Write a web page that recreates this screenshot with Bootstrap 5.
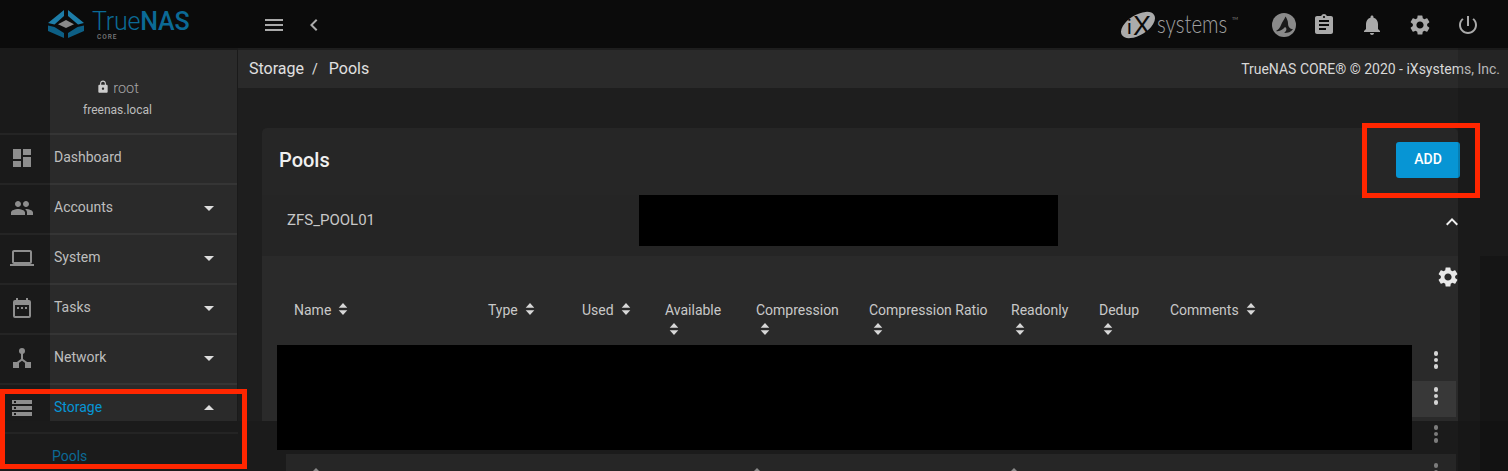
<!DOCTYPE html>
<html lang="en">
<head>
<meta charset="utf-8">
<title>TrueNAS Pools</title>
<link rel="stylesheet" href="https://cdn.jsdelivr.net/npm/bootstrap@5.3.0/dist/css/bootstrap.min.css">
<style>
html,body{height:471px;overflow:hidden;background:#1c1c1c}
body{font-family:Roboto,"Liberation Sans",sans-serif;font-size:14px;color:#c4c4c4}
.shell{width:1508px;height:471px;overflow:hidden}
.upper{height:421px;overflow:hidden}
.lower{height:50px;overflow:hidden;background:#1b1b1b}
.topbar{height:48px;background:#0b0b0b}
.brand{width:262px;padding-left:48px}
.brand-name{font-size:25px;line-height:25px;color:#0b6a96;font-weight:300;letter-spacing:-.2px}
.brand-name b{font-weight:500;letter-spacing:-.2px}
.brand-sub{font-size:6.5px;line-height:7px;letter-spacing:1px;color:#7c7c7c;padding-left:5px;font-weight:500}
.brand-words{margin-left:8px;margin-top:2px}
.ico{fill:#aaa;display:block}
.ctl{width:24px;height:24px;margin-top:2px}
.ctl-back{margin-left:16px}
.tool{width:48px;height:48px}
.tool-sm{width:32px}
.tools{padding-right:16px}
.vendor{margin-right:29px;margin-top:2px}
.body-row{height:373px}
.side{width:238px;background:#1a1a1a;padding-top:2px;flex:none}
.who-wrap{height:83px;position:relative}
.who-panel{height:83px;margin-left:50px;margin-right:1px;background:#2a2a2a}
.who{position:absolute;left:0;top:0;width:235px;padding-top:29px;text-align:center;line-height:20px}
.who-name{color:#a6a6a6;font-weight:300;font-size:14.5px}
.who-host{font-size:12px;color:#bdbdbd;margin-top:1px}
.who .ico{display:inline-block;vertical-align:-1px;margin-right:3px;fill:#ccc}
.rail-row{height:50px;margin-right:1px;flex:none}
.rail-cell{width:50px;flex:none;border-top:2px solid #242424}
.rail-cell .ico{fill:#8e8e8e;margin-top:-3px;margin-left:-6px}
.rail-label{background:#2a2a2a;border-top:2px solid #353535;padding:0 16px 3px 4px;color:#bebebe;flex:1 1 auto}
.rail-label .ico{fill:#ddd}
.is-on{color:#0795d4}
.main{flex:1 1 auto;padding-top:2px;background:#1e1e1e;min-width:0}
.crumbs{height:38px;background:#2a2a2a;padding:0 8px 0 11px;color:#e0e0e0;font-size:16px}
.crumbs-sep{margin:0 11px 0 8px;font-size:14px}
.legal{font-size:14px;color:#d8d8d8}
.pool-card{margin:40px 50px 0 24px;background:#262626;border:0;border-radius:5px 5px 0 0;--bs-card-bg:#262626}
.pool-head{height:67px;padding:0 0 4px 17px}
.pool-title{font-size:20px;font-weight:500;color:#f0f0f0}
.btn-add{width:64px;height:36px;padding:0;margin-right:-2px;background:#0795d4;border:0;border-radius:3px;color:#fff;font-size:14px;font-weight:500}
.pool-row{height:61px;padding:0 0 10px 25px;background:#252525;font-size:15px;color:#c8c8c8}
.pool-row .ico{fill:#f0f0f0;margin-right:-6px;margin-top:2px}
.pool-body{background:#2a2a2a;padding-left:15px;padding-right:2px;height:200px}
.gear-row{height:42px}
.gear-row .ico{fill:#e8e8e8;margin-right:-4px;margin-top:9px}
.tbl{--bs-table-bg:transparent;--bs-table-color:#c8c8c8;table-layout:fixed;width:1179px;margin:0}
.tbl th{font-weight:400;padding:2px 0 0 17px;height:47px;vertical-align:top;line-height:20px;white-space:nowrap}
.tbl td{height:36px;padding:0}
.tbl td.act{padding:0 0 0 4px;text-align:center;vertical-align:top}
.tbl tr.is-hover td{background:#383838}
.sorter{display:inline-block;width:10px;height:12px;margin-left:7px;vertical-align:0;fill:#d8d8d8}
.sorter.under{display:block;margin:3px 0 0 4px}
.dots{display:flex;flex-direction:column;align-items:center;gap:2px;padding-top:6px}
.dots i{display:block;width:4.5px;height:4.5px;border-radius:50%;background:#d4d4d4}
.dots.dim i{background:#7c7c7c}
.low-side{width:238px;flex:none;padding-top:11px;padding-left:5px}
.low-line{border-top:2px solid #242424;padding:12px 0 0 47px;color:#0b6a96;line-height:20px}
.low-main{flex:1 1 auto}
.low-kebabs{height:33px;width:1221px}
.low-kebabs .dots{width:44px;margin-left:1176px;padding-top:4px}
.low-card{height:17px;margin:0 52px 0 48px;background:#262626;position:relative}
.low-dots{position:absolute;left:1128px;top:0;width:44px;padding-top:9px}
.tip{width:0;height:0;border:3px solid transparent;border-top:0;border-bottom:3px solid #8a8a8a;position:absolute;top:14px}
.tip-a{left:27px}.tip-b{left:468px}.tip-c{left:725px}
.cover{position:absolute;background:#000;z-index:3}
.cover-a{left:639px;top:195px;width:419px;height:51px}
.cover-b{left:277px;top:345px;width:1135px;height:105px}
.frame{position:absolute;border:5px solid #ff2600;z-index:4}
.frame-a{left:1362px;top:123px;width:118px;height:75px}
.frame-b{left:0;top:389px;width:247px;height:80px}
.dimmer{position:absolute;left:1458px;top:48px;width:50px;height:423px;background:rgba(8,8,8,.16);z-index:2}
.dimmer-far{position:absolute;left:1480px;top:256px;width:28px;height:215px;background:rgba(0,0,0,.18);z-index:2}
.wrap-rel{position:relative}
</style>
</head>
<body>
<svg width="0" height="0" class="d-none">
<symbol id="i-dash" viewBox="0 0 24 24"><path d="M3 13h8V3H3v10zm0 8h8v-6H3v6zm10 0h8V11h-8v10zm0-18v6h8V3h-8z"/></symbol>
<symbol id="i-group" viewBox="0 0 24 24"><path d="M16 11c1.66 0 2.99-1.34 2.99-3S17.66 5 16 5c-1.66 0-3 1.34-3 3s1.34 3 3 3zm-8 0c1.66 0 2.99-1.34 2.99-3S9.66 5 8 5C6.34 5 5 6.34 5 8s1.34 3 3 3zm0 2c-2.33 0-7 1.17-7 3.5V19h14v-2.5c0-2.33-4.67-3.5-7-3.5zm8 0c-.29 0-.62.02-.97.05 1.16.84 1.97 1.97 1.97 3.45V19h6v-2.5c0-2.33-4.67-3.5-7-3.5z"/></symbol>
<symbol id="i-laptop" viewBox="0 0 24 24"><path d="M20 18c1.1 0 1.99-.9 1.99-2L22 6c0-1.1-.9-2-2-2H4c-1.1 0-2 .9-2 2v10c0 1.1.9 2 2 2H0v2h24v-2h-4zM4 6h16v10H4V6z"/></symbol>
<symbol id="i-cal" viewBox="0 0 24 24"><path fill-rule="evenodd" d="M19 4h-1V2h-2v2H8V2H6v2H5a2 2 0 0 0-2 2v14a2 2 0 0 0 2 2h14a2 2 0 0 0 2-2V6a2 2 0 0 0-2-2zm0 16H5V9h14v11z"/><path d="M7 11h2v2H7zM11 11h2v2h-2zM15 11h2v2h-2z"/></symbol>
<symbol id="i-net" viewBox="0 0 24 24"><circle cx="12" cy="5" r="3"/><path d="M11 7h2v6l5.500 4-1.200 1.600L12 14.800 6.700 18.600 5.500 17l5.500-4z"/><path d="M3 16h6v6H3zM15 16h6v6h-6z"/></symbol>
<symbol id="i-store" viewBox="0 0 24 24"><path d="M2 20h20v-4H2v4zm2-3h2v2H4v-2zM2 4v4h20V4H2zm4 3H4V5h2v2zm-4 7h20v-4H2v4zm2-3h2v2H4v-2z"/></symbol>
<symbol id="i-menu" viewBox="0 0 24 24"><path d="M3 18h18v-2H3v2zm0-5h18v-2H3v2zm0-7v2h18V6H3z"/></symbol>
<symbol id="i-back" viewBox="0 0 24 24"><path d="M15.410 7.410L14 6l-6 6 6 6 1.410-1.410L10.830 12z"/></symbol>
<symbol id="i-clip" viewBox="0 0 24 24"><path d="M19 3h-4.180C14.400 1.840 13.300 1 12 1c-1.300 0-2.400.84-2.820 2H5c-1.100 0-2 .9-2 2v14c0 1.100.9 2 2 2h14c1.100 0 2-.9 2-2V5c0-1.100-.9-2-2-2zm-7 0c.55 0 1 .45 1 1s-.45 1-1 1-1-.45-1-1 .45-1 1-1zm2 14H7v-2h7v2zm3-4H7v-2h10v2zm0-4H7V7h10v2z"/></symbol>
<symbol id="i-bell" viewBox="0 0 24 24"><path d="M12 22c1.100 0 2-.9 2-2h-4c0 1.100.89 2 2 2zm6-6v-5c0-3.070-1.640-5.640-4.500-6.320V4c0-.83-.67-1.500-1.500-1.500s-1.500.67-1.500 1.500v.68C7.630 5.360 6 7.920 6 11v5l-2 2v1h16v-1l-2-2z"/></symbol>
<symbol id="i-gear" viewBox="0 0 24 24"><path d="M19.140 12.940c.04-.3.06-.61.06-.94 0-.32-.02-.64-.07-.94l2.030-1.580a.49.49 0 0 0 .12-.61l-1.920-3.320a.488.488 0 0 0-.59-.22l-2.390.96c-.5-.38-1.030-.7-1.620-.94l-.36-2.540a.484.484 0 0 0-.48-.41h-3.840c-.24 0-.43.17-.47.41l-.36 2.540c-.59.24-1.130.57-1.620.94l-2.390-.96c-.22-.08-.47 0-.59.22L2.740 8.870c-.12.21-.08.47.12.61l2.030 1.580c-.05.3-.09.63-.09.94s.02.64.07.94l-2.030 1.580a.49.49 0 0 0-.12.61l1.920 3.320c.12.22.37.29.59.22l2.390-.96c.5.38 1.030.7 1.620.94l.36 2.540c.05.24.24.41.48.41h3.840c.24 0 .44-.17.47-.41l.36-2.540c.59-.24 1.130-.56 1.620-.94l2.390.96c.22.08.47 0 .59-.22l1.920-3.320c.12-.22.07-.47-.12-.61l-2.010-1.580zM12 15.600c-1.980 0-3.600-1.620-3.600-3.600s1.620-3.600 3.600-3.600 3.600 1.620 3.600 3.600-1.620 3.600-3.600 3.600z"/></symbol>
<symbol id="i-power" viewBox="0 0 24 24"><path d="M13 3h-2v10h2V3zm4.830 2.170l-1.420 1.420C17.990 7.860 19 9.810 19 12c0 3.870-3.130 7-7 7s-7-3.130-7-7c0-2.190 1.010-4.140 2.580-5.420L6.170 5.170C4.230 6.820 3 9.260 3 12c0 4.970 4.030 9 9 9s9-4.030 9-9c0-2.740-1.230-5.180-3.170-6.830z"/></symbol>
<symbol id="i-lock" viewBox="0 0 24 24"><path d="M18 8h-1V6c0-2.760-2.240-5-5-5S7 3.240 7 6v2H6c-1.100 0-2 .9-2 2v10c0 1.100.9 2 2 2h12c1.100 0 2-.9 2-2V10c0-1.100-.9-2-2-2zm-6 9c-1.100 0-2-.9-2-2s.9-2 2-2 2 .9 2 2-.9 2-2 2zm3.100-9H8.900V6c0-1.710 1.390-3.100 3.100-3.100 1.710 0 3.100 1.390 3.100 3.100v2z"/></symbol>
<symbol id="i-down" viewBox="0 0 24 24"><path d="M7 10l5 5 5-5z"/></symbol>
<symbol id="i-up" viewBox="0 0 24 24"><path d="M7 14l5-5 5 5z"/></symbol>
<symbol id="i-chev" viewBox="0 0 24 24"><path d="M12 8l-6 6 1.410 1.410L12 10.830l4.590 4.580L18 14z"/></symbol>
<symbol id="i-sort" viewBox="0 0 10 14"><path d="M5 0l5 5.500H0zM5 14L0 8.500h10z"/></symbol>
</svg>

<div class="shell wrap-rel">
  <div class="upper">
    <header class="topbar d-flex align-items-center">
      <div class="brand d-flex align-items-center">
        <svg width="36" height="30" viewBox="48 9 36 30" aria-label="TrueNAS logo">
          <path fill="#1d7da8" d="M48 23l16-13v6l-9.500 8.500zM68 10l16 13-6 1.500L68 16z"/>
          <path fill="#0d5f85" d="M48 25.500l6.500 1.500L64 33v5l-16-7zM84 25.500L77.500 27 68 33v5l16-7z"/>
          <path fill="#8a8a8a" d="M66 20l8 4.200L66 28l-8-3.800z"/>
        </svg>
        <div class="brand-words">
          <div class="brand-name">True<b>NAS</b></div>
          <div class="brand-sub">CORE</div>
        </div>
      </div>
      <svg class="ico ctl"><use href="#i-menu"/></svg>
      <svg class="ico ctl ctl-back"><use href="#i-back"/></svg>
      <div class="ms-auto d-flex align-items-center tools">
        <svg class="vendor" width="120" height="36" viewBox="0 0 120 36" aria-label="iXsystems">
          <ellipse cx="19" cy="18" rx="19" ry="10" fill="#ababab" transform="rotate(-32 19 18)"/>
          <text x="8" y="27" font-family="Liberation Sans, sans-serif" font-size="21" fill="#0b0b0b">i</text>
          <text x="14" y="28" font-family="Liberation Sans, sans-serif" font-size="27" fill="#0b0b0b">X</text>
          <text transform="translate(38 26) scale(.82 1)" font-family="Lato, sans-serif" font-size="25" font-weight="300" fill="#a0a0a0">systems</text>
          <text x="113" y="13" font-family="Lato, sans-serif" font-size="4" fill="#888">TM</text>
        </svg>
        <div class="tool tool-sm d-flex align-items-center justify-content-center">
          <svg class="ctl" viewBox="0 0 24 24"><circle cx="12" cy="12" r="12" fill="#8a8a8a"/><path fill="#1a1a1a" d="M13.500 3.500C12 7 10 9 9 12c-1 3-3 5-5 6 4 1 7-2 9-4 2 1 2 4-1 6 4 0 7-1 9-4-3 0-5-2-5-6 0-2-1.500-5-2.500-6.500z"/></svg>
        </div>
        <div class="tool d-flex align-items-center justify-content-center"><svg class="ico ctl"><use href="#i-clip"/></svg></div>
        <div class="tool d-flex align-items-center justify-content-center"><svg class="ico ctl"><use href="#i-bell"/></svg></div>
        <div class="tool d-flex align-items-center justify-content-center"><svg class="ico ctl"><use href="#i-gear"/></svg></div>
        <div class="tool d-flex align-items-center justify-content-center"><svg class="ico ctl"><use href="#i-power"/></svg></div>
      </div>
    </header>
    <div class="body-row d-flex">
      <aside class="side">
        <div class="who-wrap">
          <div class="who-panel"></div>
          <div class="who">
            <div class="who-name"><svg class="ico" width="14" height="14"><use href="#i-lock"/></svg>root</div>
            <div class="who-host">freenas.local</div>
          </div>
        </div>
        <div class="rail-row d-flex">
          <div class="rail-cell d-flex align-items-center justify-content-center"><svg class="ico" width="24" height="24"><use href="#i-dash"/></svg></div>
          <div class="rail-label d-flex align-items-center">Dashboard</div>
        </div>
        <div class="rail-row d-flex">
          <div class="rail-cell d-flex align-items-center justify-content-center"><svg class="ico" width="24" height="24"><use href="#i-group"/></svg></div>
          <div class="rail-label d-flex align-items-center justify-content-between">Accounts<svg class="ico" width="24" height="24"><use href="#i-down"/></svg></div>
        </div>
        <div class="rail-row d-flex">
          <div class="rail-cell d-flex align-items-center justify-content-center"><svg class="ico" width="24" height="24"><use href="#i-laptop"/></svg></div>
          <div class="rail-label d-flex align-items-center justify-content-between">System<svg class="ico" width="24" height="24"><use href="#i-down"/></svg></div>
        </div>
        <div class="rail-row d-flex">
          <div class="rail-cell d-flex align-items-center justify-content-center"><svg class="ico" width="24" height="24"><use href="#i-cal"/></svg></div>
          <div class="rail-label d-flex align-items-center justify-content-between">Tasks<svg class="ico" width="24" height="24"><use href="#i-down"/></svg></div>
        </div>
        <div class="rail-row d-flex">
          <div class="rail-cell d-flex align-items-center justify-content-center"><svg class="ico" width="24" height="24"><use href="#i-net"/></svg></div>
          <div class="rail-label d-flex align-items-center justify-content-between">Network<svg class="ico" width="24" height="24"><use href="#i-down"/></svg></div>
        </div>
        <div class="rail-row d-flex">
          <div class="rail-cell d-flex align-items-center justify-content-center"><svg class="ico" width="24" height="24"><use href="#i-store"/></svg></div>
          <div class="rail-label d-flex align-items-center justify-content-between"><span class="is-on">Storage</span><svg class="ico" width="24" height="24"><use href="#i-up"/></svg></div>
        </div>
      </aside>
      <main class="main">
        <div class="crumbs d-flex align-items-center">
          <span>Storage</span><span class="crumbs-sep">/</span><span>Pools</span>
          <span class="legal ms-auto">TrueNAS CORE® © 2020 - iXsystems, Inc.</span>
        </div>
        <section class="card pool-card">
          <div class="pool-head d-flex align-items-center justify-content-between">
            <span class="pool-title">Pools</span>
            <button type="button" class="btn btn-add">ADD</button>
          </div>
          <div class="pool-row d-flex align-items-center justify-content-between">
            <span>ZFS_POOL01</span>
            <svg class="ico" width="24" height="24"><use href="#i-chev"/></svg>
          </div>
          <div class="pool-body">
            <div class="gear-row d-flex justify-content-end align-items-start"><svg class="ico" width="24" height="24"><use href="#i-gear"/></svg></div>
            <table class="table table-borderless tbl">
              <colgroup>
                <col style="width:194px"><col style="width:94px"><col style="width:83px"><col style="width:91px"><col style="width:113px"><col style="width:142px"><col style="width:88px"><col style="width:71px"><col style="width:259px"><col style="width:44px">
              </colgroup>
              <thead>
                <tr>
                  <th>Name<svg class="sorter"><use href="#i-sort"/></svg></th>
                  <th>Type<svg class="sorter"><use href="#i-sort"/></svg></th>
                  <th>Used<svg class="sorter"><use href="#i-sort"/></svg></th>
                  <th>Available<svg class="sorter under"><use href="#i-sort"/></svg></th>
                  <th>Compression<svg class="sorter under"><use href="#i-sort"/></svg></th>
                  <th>Compression Ratio<svg class="sorter under"><use href="#i-sort"/></svg></th>
                  <th>Readonly<svg class="sorter under"><use href="#i-sort"/></svg></th>
                  <th>Dedup<svg class="sorter under"><use href="#i-sort"/></svg></th>
                  <th>Comments<svg class="sorter"><use href="#i-sort"/></svg></th>
                  <th></th>
                </tr>
              </thead>
              <tbody>
                <tr><td colspan="9"></td><td class="act"><div class="dots"><i></i><i></i><i></i></div></td></tr>
                <tr class="is-hover"><td colspan="9"></td><td class="act"><div class="dots"><i></i><i></i><i></i></div></td></tr>
              </tbody>
            </table>
          </div>
        </section>
      </main>
    </div>
  </div>
  <div class="lower d-flex">
    <div class="low-side"><div class="low-line">Pools</div></div>
    <div class="low-main">
      <div class="low-kebabs"><div class="dots dim"><i></i><i></i><i></i></div></div>
      <div class="low-card">
        <span class="tip tip-a"></span><span class="tip tip-b"></span><span class="tip tip-c"></span>
        <div class="dots dim low-dots"><i></i><i></i><i></i></div>
      </div>
    </div>
  </div>
  <div class="dimmer"></div>
  <div class="dimmer-far"></div>
  <div class="cover cover-a"></div>
  <div class="cover cover-b"></div>
  <div class="frame frame-a"></div>
  <div class="frame frame-b"></div>
</div>
<script src="https://cdn.jsdelivr.net/npm/bootstrap@5.3.0/dist/js/bootstrap.bundle.min.js"></script>
</body>
</html>
